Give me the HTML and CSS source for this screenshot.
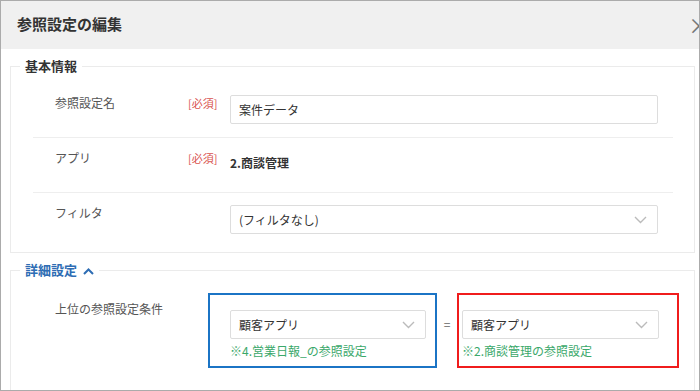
FILE: index.html
```html
<!DOCTYPE html>
<html lang="ja">

<head>
  <meta charset="UTF-8" />
  <title>参照設定の編集</title>
  <link rel="stylesheet" href="styles.css">
</head>

<body>
  <div class="dialog">
    <div class="dialog-header">
      <h2 class="dialog-title">参照設定の編集</h2>
      <span class="dialog-close">×</span>
    </div>

    <div class="dialog-body">
      <fieldset class="section">
        <legend class="section-title">基本情報</legend>
        <div class="section-rows">
          <div class="row">
            <div class="row-label">参照設定名</div>
            <div class="row-required">[必須]</div>
            <div class="row-control">
              <div class="field">案件データ</div>
            </div>
          </div>
          <div class="row">
            <div class="row-label">アプリ</div>
            <div class="row-required">[必須]</div>
            <div class="row-control">
              <div class="row-value">2.商談管理</div>
            </div>
          </div>
          <div class="row">
            <div class="row-label">フィルタ</div>
            <div class="row-required"></div>
            <div class="row-control">
              <div class="field field-select">
                <span>(フィルタなし)</span>
                <svg class="chevron" width="13" height="8" viewBox="0 0 13 8"><polyline points="1,1 6.5,6.5 12,1" /></svg>
              </div>
            </div>
          </div>
        </div>
      </fieldset>

      <fieldset class="section section-detail">
        <legend class="section-title section-title-link">
          詳細設定
          <svg class="chevron-up" width="11" height="7" viewBox="0 0 11 7"><polyline points="1,6 5.5,1.5 10,6" /></svg>
        </legend>
        <div class="section-rows section-rows-detail">
          <div class="row row-cond">
            <div class="row-label row-label-wide">上位の参照設定条件</div>
            <div class="cond-box cond-box-blue">
              <div class="field field-select">
                <span>顧客アプリ</span>
                <svg class="chevron" width="13" height="8" viewBox="0 0 13 8"><polyline points="1,1 6.5,6.5 12,1" /></svg>
              </div>
              <div class="cond-note">※4.営業日報_の参照設定</div>
            </div>
            <div class="cond-eq">=</div>
            <div class="cond-box cond-box-red">
              <div class="field field-select">
                <span>顧客アプリ</span>
                <svg class="chevron" width="13" height="8" viewBox="0 0 13 8"><polyline points="1,1 6.5,6.5 12,1" /></svg>
              </div>
              <div class="cond-note">※2.商談管理の参照設定</div>
            </div>
          </div>
        </div>
      </fieldset>
    </div>
  </div>
</body>

</html>
```

FILE: styles.css
```css
html,
body {
  margin: 0;
  padding: 0;
  background-color: #ffffff;
  font-family: "Noto Sans CJK JP", "Noto Sans", sans-serif;
  color: #333333;
}

.dialog {
  position: relative;
  width: 700px;
  height: 391px;
  box-sizing: border-box;
  border: 1px solid #ababab;
  overflow: hidden;
  background-color: #ffffff;
}

.dialog-header {
  height: 48px;
  display: flex;
  align-items: center;
  padding: 0 0 3px 16px;
  box-sizing: border-box;
  background-color: #f0f0f0;
}

.dialog-title {
  margin: 0;
  font-size: 15px;
  font-weight: 700;
  line-height: 20px;
  color: #333333;
}

/* the close button sits half outside the visible frame */
.dialog-close {
  position: absolute;
  top: 10px;
  right: -11px;
  font-size: 22px;
  line-height: 26px;
  color: #777777;
}

.dialog-body {
  padding: 7px 4px 0 9px;
}

.section {
  margin: 0;
  padding: 0 0 5px 0;
  min-width: 0;
  border: 1px solid #ebebeb;
}

.section-title {
  margin-left: 9px;
  padding: 0 5px;
  font-size: 13px;
  font-weight: 700;
  line-height: 20px;
  color: #333333;
}

.section-title-link {
  color: #2e6db4;
}

.chevron-up {
  margin-left: 3px;
  vertical-align: 0;
}

.chevron-up polyline {
  fill: none;
  stroke: #2e6db4;
  stroke-width: 2;
}

.section-rows {
  padding: 7px 21px 0 22px;
}

.section-detail {
  margin-top: 7px;
  padding-bottom: 40px;
}

.section-rows-detail {
  padding-top: 0;
  padding-right: 0;
}

.row {
  display: flex;
  align-items: flex-start;
  min-height: 30px;
  padding: 11px 15px 13px 22px;
  border-bottom: 1px solid #eeeeee;
}

.row:last-child {
  border-bottom: none;
}

.row-label {
  width: 133px;
  flex-shrink: 0;
  font-size: 12px;
  line-height: 18px;
  color: #555555;
}

.row-required {
  width: 42px;
  flex-shrink: 0;
  font-size: 11px;
  line-height: 18px;
  color: #d9534f;
}

.row-control {
  flex: 1;
}

.row-value {
  margin-top: 5px;
  font-size: 12px;
  font-weight: 700;
  line-height: 18px;
  color: #333333;
}

.field {
  height: 29px;
  margin-top: 1px;
  box-sizing: border-box;
  border: 1px solid #dddddd;
  border-radius: 2px;
  padding: 0 8px;
  font-size: 12px;
  line-height: 27px;
  color: #333333;
  background-color: #ffffff;
}

.field-select {
  display: flex;
  align-items: center;
  justify-content: space-between;
  padding-right: 10px;
}

.chevron polyline {
  fill: none;
  stroke: #bbbbbb;
  stroke-width: 1.4;
}

/* condition row */
.row-cond {
  padding: 13px 0 0 22px;
}

.row-label-wide {
  width: 153px;
  margin-top: 7px;
}

.cond-box {
  flex-shrink: 0;
  padding: 15px 0 7px 0;
}

.cond-box .field {
  margin-top: 0;
}

.cond-box-blue {
  width: 196px;
  padding-left: 20px;
  padding-right: 9px;
  border: 2px solid #1b74c5;
}

.cond-box-red {
  width: 197px;
  padding-left: 3px;
  padding-right: 18px;
  border: 2px solid #f01c1c;
}

.cond-note {
  margin-top: 4px;
  font-size: 12px;
  line-height: 16px;
  color: #3aa86a;
}

.cond-eq {
  width: 20px;
  flex-shrink: 0;
  margin-top: 22px;
  text-align: center;
  font-size: 12px;
  line-height: 18px;
  color: #666666;
}
```
